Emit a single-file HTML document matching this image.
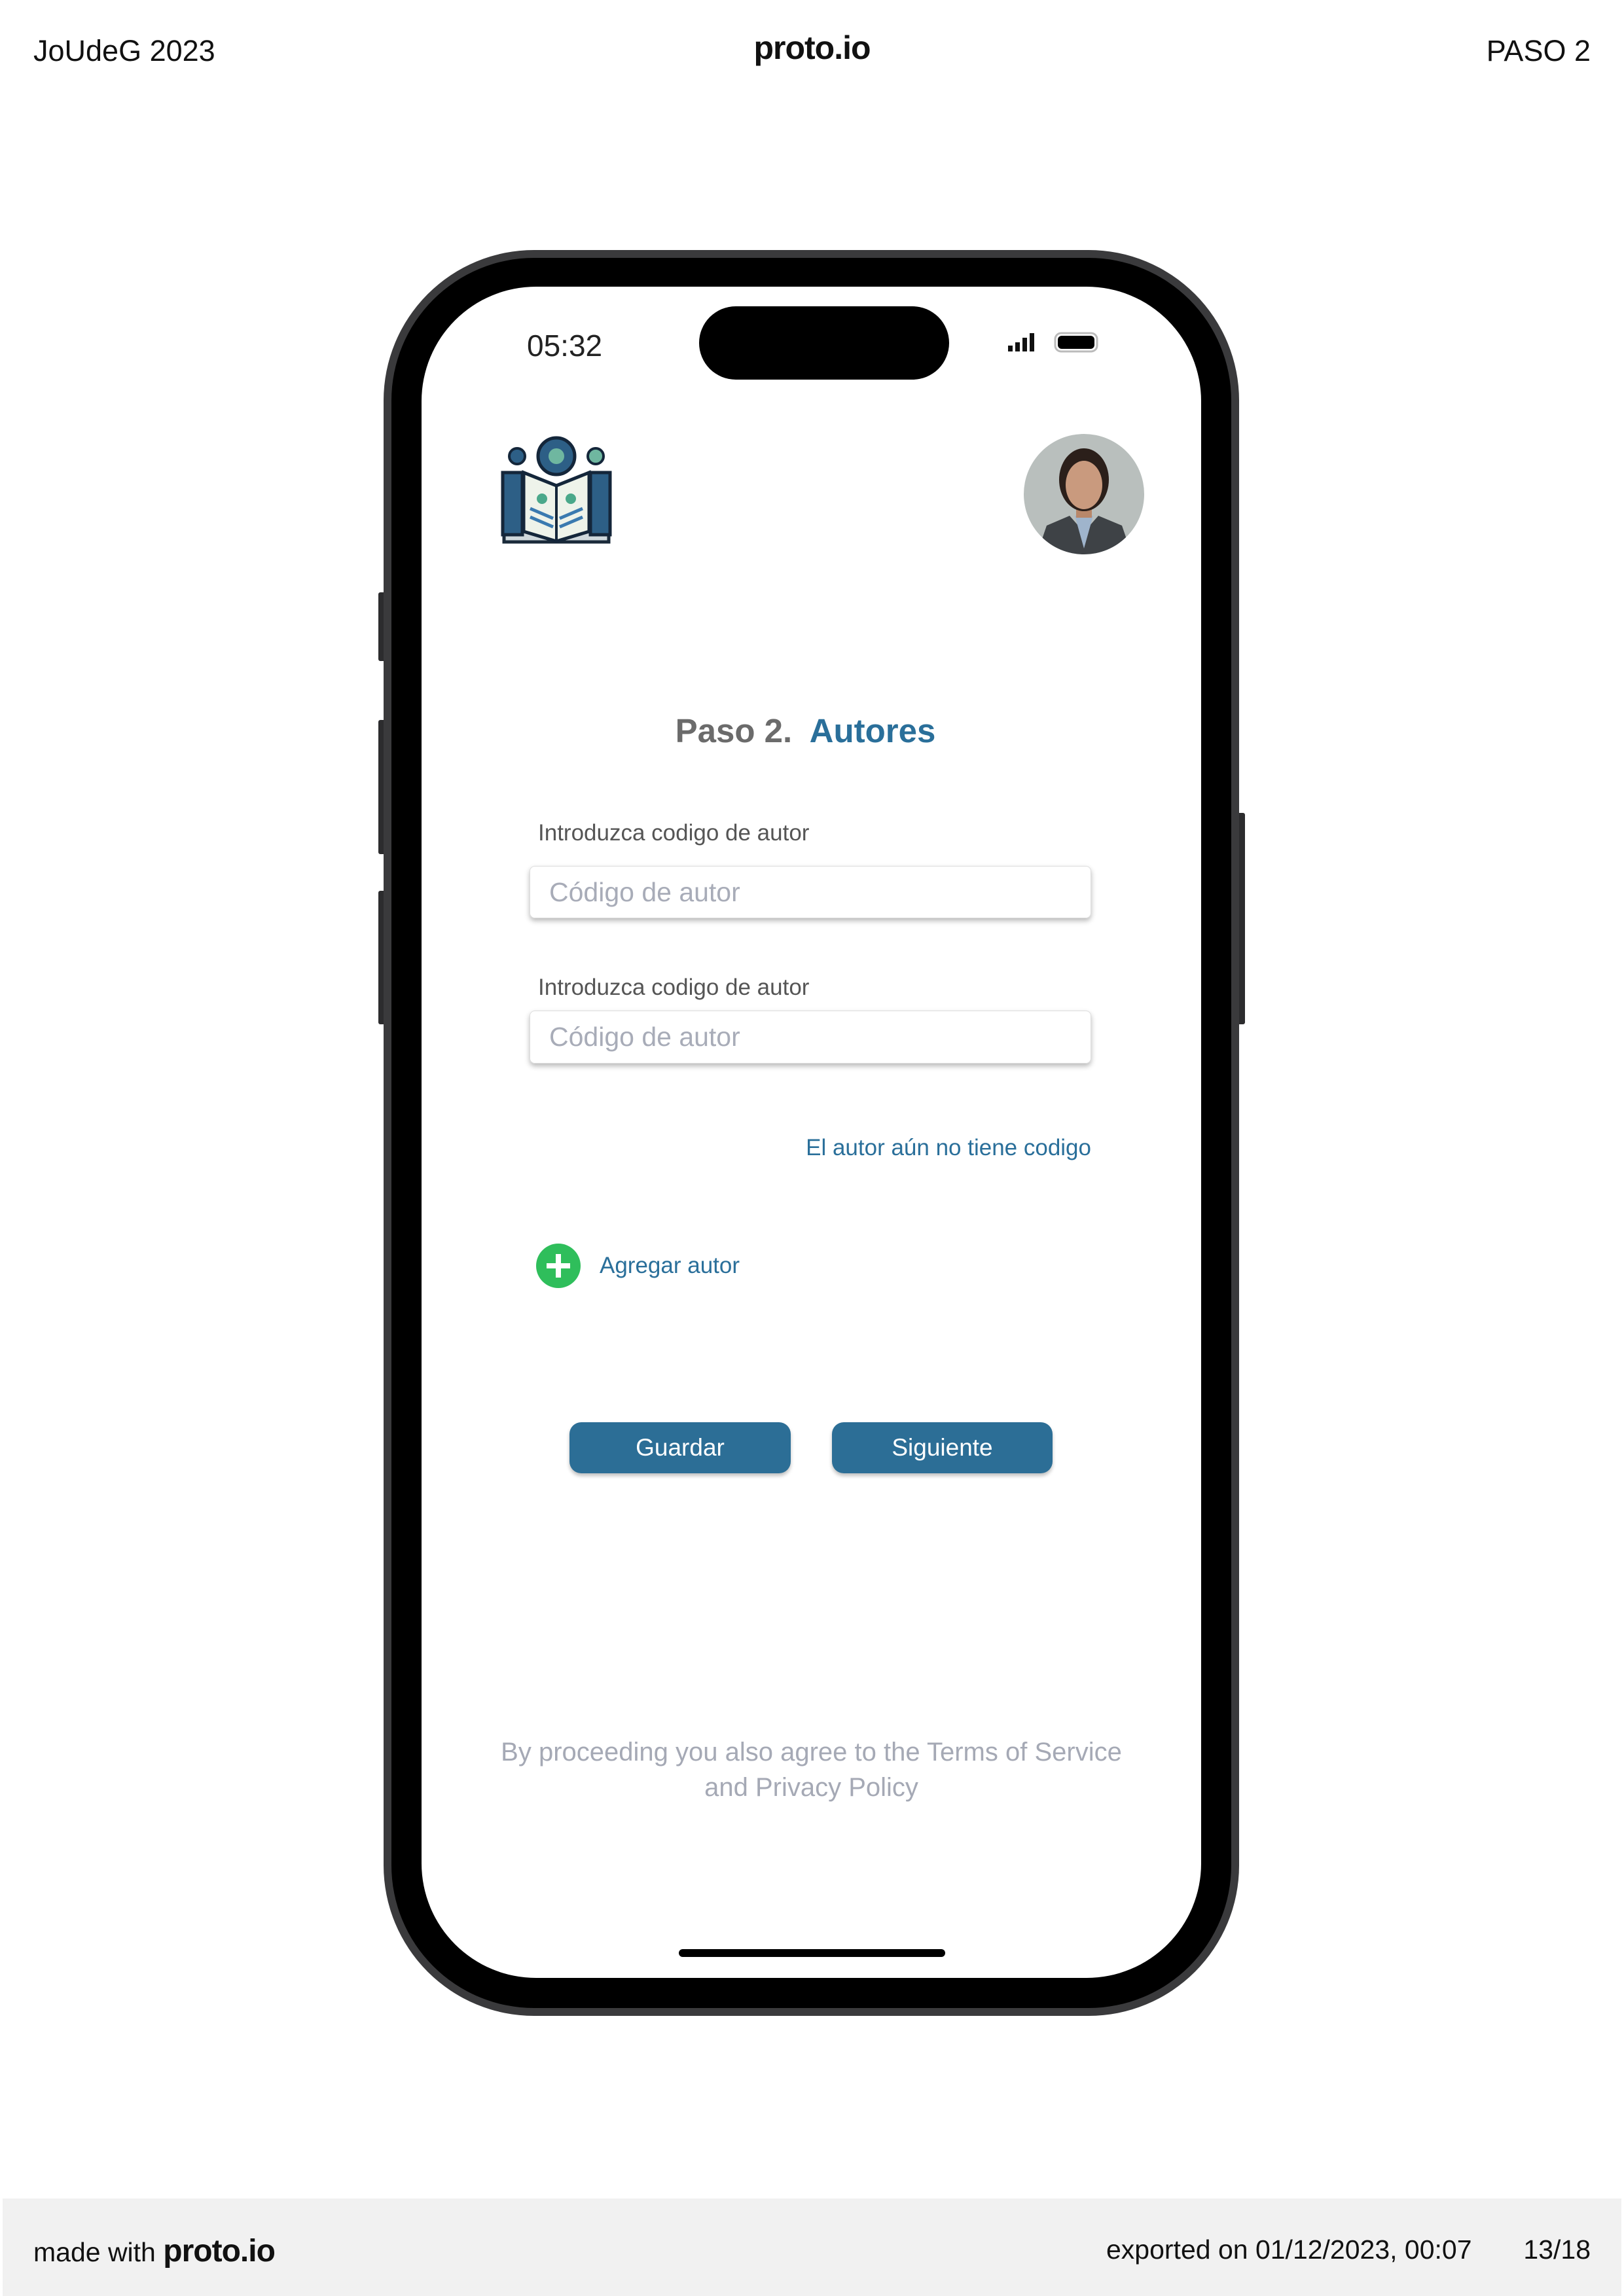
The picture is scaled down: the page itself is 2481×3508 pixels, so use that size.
<!DOCTYPE html>
<html><head><meta charset="utf-8"><style>
*{margin:0;padding:0;box-sizing:border-box}
body{width:2481px;height:3508px;background:#fff;position:relative;font-family:"Liberation Sans",sans-serif;overflow:hidden}
.a{position:absolute}
.brand{font-weight:bold;letter-spacing:-1px}
</style></head><body>
<div class="a" style="left:51px;top:52px;font-size:45px;color:#111">JoUdeG 2023</div>
<div class="a brand" style="left:0;width:2481px;text-align:center;top:44px;font-size:50px;color:#111">proto.io</div>
<div class="a" style="right:51px;top:52px;font-size:45px;color:#111">PASO 2</div>

<div class="a" style="left:578px;top:905px;width:12px;height:105px;background:#2c2c2e;border-radius:3px"></div>
<div class="a" style="left:578px;top:1100px;width:12px;height:205px;background:#2c2c2e;border-radius:3px"></div>
<div class="a" style="left:578px;top:1361px;width:12px;height:204px;background:#2c2c2e;border-radius:3px"></div>
<div class="a" style="left:1890px;top:1242px;width:12px;height:323px;background:#2c2c2e;border-radius:3px"></div>

<div class="a" style="left:586px;top:382px;width:1307px;height:2698px;background:#3a3a3c;border-radius:230px"></div>
<div class="a" style="left:598px;top:394px;width:1283px;height:2674px;background:#000;border-radius:218px"></div>
<div class="a" style="left:644px;top:438px;width:1191px;height:2584px;background:#fff;border-radius:175px;overflow:hidden">
  <div class="a" style="left:424px;top:30px;width:382px;height:112px;background:#000;border-radius:56px"></div>
  <div class="a" style="left:161px;top:63px;font-size:46px;color:#222">05:32</div>
  <svg class="a" style="left:896px;top:68px" width="140" height="34" viewBox="0 0 140 34">
    <rect x="0" y="22" width="7" height="9" fill="#111"/><rect x="11" y="17" width="7" height="14" fill="#111"/><rect x="22" y="10" width="7" height="21" fill="#111"/><rect x="33" y="3" width="7" height="28" fill="#111"/>
    <rect x="72" y="3" width="64" height="28" rx="9" fill="none" stroke="#bbb" stroke-width="3"/><rect x="76" y="7" width="56" height="20" rx="6" fill="#000"/>
  </svg>
  <svg class="a" style="left:116px;top:224px" width="180" height="174" viewBox="0 0 180 174">
    <rect x="10" y="150" width="160" height="16" fill="#cfd8dc" stroke="#1a2a3a" stroke-width="5"/>
    <rect x="8" y="60" width="30" height="95" fill="#2d5f86" stroke="#14263a" stroke-width="5"/>
    <rect x="142" y="60" width="30" height="95" fill="#2d5f86" stroke="#14263a" stroke-width="5"/>
    <path d="M40 60 L90 80 L140 60 L140 150 L90 165 L40 150 Z" fill="#eef3ea" stroke="#14263a" stroke-width="5"/>
    <path d="M90 80 V165" stroke="#14263a" stroke-width="4"/>
    <path d="M50 115 L85 130 M50 128 L85 143 M130 115 L95 130 M130 128 L95 143" stroke="#3a7ab0" stroke-width="5"/>
    <circle cx="90" cy="35" r="28" fill="#2d5f86" stroke="#14263a" stroke-width="5"/>
    <circle cx="90" cy="35" r="12" fill="#6fb7a0"/>
    <circle cx="30" cy="35" r="12" fill="#2d5f86" stroke="#14263a" stroke-width="4"/>
    <circle cx="150" cy="35" r="12" fill="#6fb7a0" stroke="#14263a" stroke-width="4"/>
    <circle cx="68" cy="100" r="8" fill="#4aa88a"/><circle cx="112" cy="100" r="8" fill="#4aa88a"/>
  </svg>
  <svg class="a" style="left:920px;top:225px" width="184" height="184" viewBox="0 0 184 184">
    <defs><clipPath id="c"><circle cx="92" cy="92" r="92"/></clipPath></defs>
    <g clip-path="url(#c)">
      <rect width="184" height="184" fill="#b9bfbd"/>
      <path d="M20 184 L35 140 L70 125 L92 150 L114 125 L150 140 L165 184Z" fill="#3e4246"/>
      <path d="M78 125 L92 175 L106 125Z" fill="#9fb4cc"/>
      <rect x="80" y="100" width="24" height="28" fill="#b8876a"/>
      <ellipse cx="92" cy="70" rx="38" ry="48" fill="#2b1f1a"/>
      <ellipse cx="92" cy="78" rx="28" ry="37" fill="#c99a7e"/>
    </g>
  </svg>
  <div class="a" style="left:0;width:1191px;text-align:center;top:649px;font-size:51px;font-weight:bold;padding-right:18px"><span style="color:#6b6b6b">Paso 2.</span>&nbsp; <span style="color:#2a6f9a">Autores</span></div>
  <div class="a" style="left:178px;top:815px;font-size:35px;color:#555">Introduzca codigo de autor</div>
  <div class="a" style="left:165px;top:885px;width:858px;height:80px;border:1px solid #ddd;border-radius:8px;box-shadow:0 4px 8px rgba(0,0,0,0.28);font-size:41px;color:#a8acb8;padding:16px 0 0 29px">Código de autor</div>
  <div class="a" style="left:178px;top:1051px;font-size:35px;color:#555">Introduzca codigo de autor</div>
  <div class="a" style="left:165px;top:1106px;width:858px;height:81px;border:1px solid #ddd;border-radius:8px;box-shadow:0 4px 8px rgba(0,0,0,0.28);font-size:41px;color:#a8acb8;padding:16px 0 0 29px">Código de autor</div>
  <div class="a" style="right:168px;top:1296px;font-size:35px;color:#2a6f9a">El autor aún no tiene codigo</div>
  <div class="a" style="left:175px;top:1462px;width:68px;height:68px;border-radius:50%;background:#2fbe5b"></div>
  <div class="a" style="left:191px;top:1492px;width:36px;height:8px;background:#fff"></div>
  <div class="a" style="left:205px;top:1478px;width:8px;height:36px;background:#fff"></div>
  <div class="a" style="left:272px;top:1476px;font-size:35px;color:#2a6f9a">Agregar autor</div>
  <div class="a" style="left:226px;top:1735px;width:338px;height:78px;background:#2c6e96;border-radius:18px;box-shadow:0 4px 6px rgba(0,0,0,0.25);color:#fff;font-size:37px;text-align:center;line-height:78px">Guardar</div>
  <div class="a" style="left:627px;top:1735px;width:337px;height:78px;background:#2c6e96;border-radius:18px;box-shadow:0 4px 6px rgba(0,0,0,0.25);color:#fff;font-size:37px;text-align:center;line-height:78px">Siguiente</div>
  <div class="a" style="left:0;width:1191px;text-align:center;top:2212px;font-size:40px;line-height:54px;color:#a5a9b5">By proceeding you also agree to the Terms of Service<br>and Privacy Policy</div>
  <div class="a" style="left:393px;top:2540px;width:407px;height:12px;background:#000;border-radius:6px"></div>
</div>

<div class="a" style="left:4px;top:3359px;width:2473px;height:149px;background:#f1f1f1"></div>
<div class="a" style="left:51px;top:3412px;font-size:41px;color:#111">made with <span class="brand" style="font-size:48px">proto.io</span></div>
<div class="a" style="left:1690px;top:3414px;font-size:41px;color:#111">exported on 01/12/2023, 00:07</div>
<div class="a" style="right:51px;top:3414px;font-size:41px;color:#111">13/18</div>
</body></html>
